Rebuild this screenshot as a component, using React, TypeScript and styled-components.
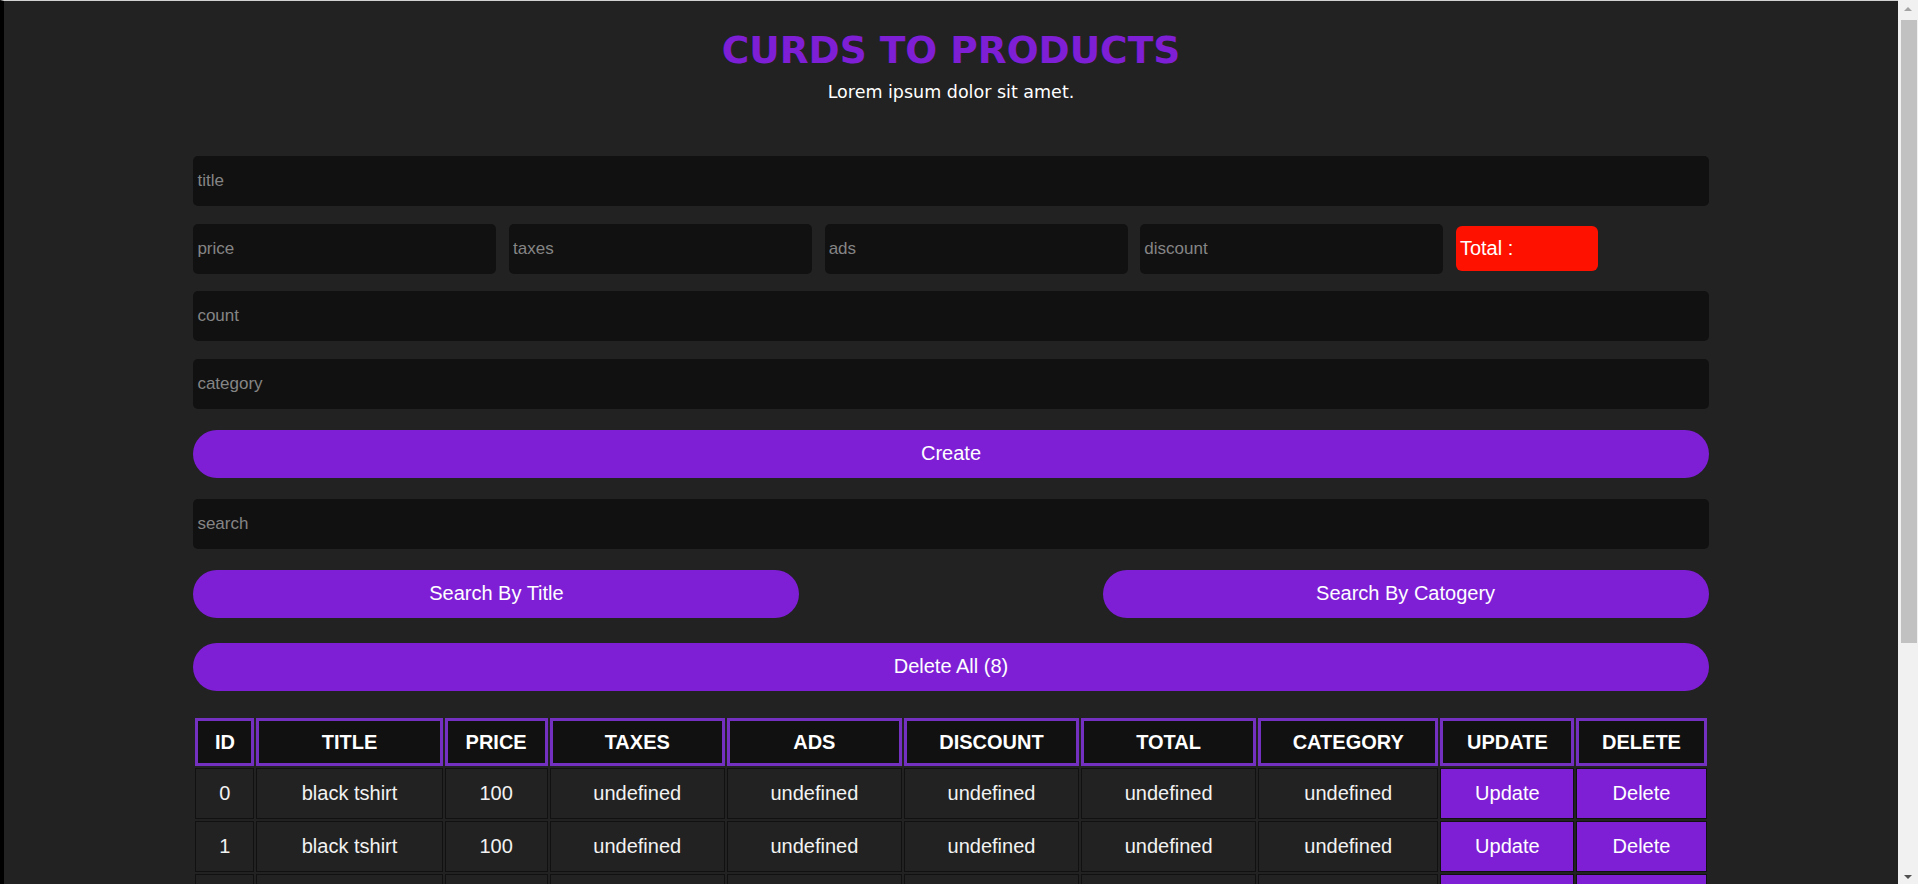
import React from 'react';
import styled, { createGlobalStyle } from 'styled-components';

interface Product {
  id: number;
  title: string;
  price: string;
  taxes?: string;
  ads?: string;
  discount?: string;
  total?: string;
  category?: string;
}

const products: Product[] = Array.from({ length: 8 }, (_, i) => ({
  id: i,
  title: 'black tshirt',
  price: '100',
}));

const columns = [
  { label: 'id', width: 59 },
  { label: 'title', width: 186 },
  { label: 'price', width: 103 },
  { label: 'taxes', width: 175 },
  { label: 'ads', width: 175 },
  { label: 'discount', width: 175 },
  { label: 'total', width: 175 },
  { label: 'category', width: 180 },
  { label: 'update', width: 134 },
  { label: 'delete', width: 130 },
];

const show = (value?: string) => (value === undefined ? 'undefined' : value);

const App: React.FC = () => {
  return (
    <>
      <GlobalStyle />
      <Frame>
        <Crud>
          <Head>
            <Title>curds to products</Title>
            <Subtitle>Lorem ipsum dolor sit amet.</Subtitle>
          </Head>

          <Controls>
            <Fields>
              <Input type="text" placeholder="title" />
              <PriceRow>
                <Input type="number" placeholder="price" $narrow />
                <Input type="number" placeholder="taxes" $narrow />
                <Input type="number" placeholder="ads" $narrow />
                <Input type="number" placeholder="discount" $narrow />
                <Total>Total :</Total>
              </PriceRow>
              <Input type="number" placeholder="count" />
              <Input type="text" placeholder="category" />
            </Fields>
            <PillButton>Create</PillButton>
            <Input type="text" placeholder="search" />
            <SearchRow>
              <PillButton $half>Search By Title</PillButton>
              <PillButton $half>Search By Catogery</PillButton>
            </SearchRow>
          </Controls>

          <Outputs>
            <PillButton>Delete All ({products.length})</PillButton>
            <Table>
              <thead>
                <tr>
                  {columns.map((col) => (
                    <Th key={col.label} style={{ width: col.width }}>
                      {col.label}
                    </Th>
                  ))}
                </tr>
              </thead>
              <tbody>
                {products.map((p) => (
                  <tr key={p.id}>
                    <Td>{p.id}</Td>
                    <Td>{p.title}</Td>
                    <Td>{p.price}</Td>
                    <Td>{show(p.taxes)}</Td>
                    <Td>{show(p.ads)}</Td>
                    <Td>{show(p.discount)}</Td>
                    <Td>{show(p.total)}</Td>
                    <Td>{show(p.category)}</Td>
                    <Td $action>
                      <RowButton>Update</RowButton>
                    </Td>
                    <Td $action>
                      <RowButton>Delete</RowButton>
                    </Td>
                  </tr>
                ))}
              </tbody>
            </Table>
          </Outputs>
        </Crud>
      </Frame>

      {/* the browser's scrollbar, as it shows in the screenshot */}
      <ScrollTrack>
        <ScrollArrow $dir="up" />
        <ScrollThumb />
        <ScrollArrow $dir="down" />
      </ScrollTrack>
    </>
  );
};

export default App;

const purple = '#7e1fd6';

const GlobalStyle = createGlobalStyle`
  * {
    box-sizing: border-box;
  }

  html,
  body {
    margin: 0;
    padding: 0;
    background-color: #222;
  }

  body {
    color: #fff;
    font-family: "Liberation Sans", Arial, sans-serif;
  }
`;

const Frame = styled.div`
  border-top: 1px solid #d2d2d2;
  border-left: 4px solid #000;
  margin-right: 20px;
  min-height: 100vh;
  padding-bottom: 20px;
`;

const Crud = styled.main`
  width: 80%;
  margin: 0 auto;
`;

const Head = styled.header`
  text-align: center;
  padding-top: 27px;
  font-family: "DejaVu Sans", Verdana, sans-serif;
`;

const Title = styled.h1`
  margin: 0;
  color: ${purple};
  font-size: 37.5px;
  line-height: 44px;
  font-weight: bold;
  text-transform: uppercase;
`;

const Subtitle = styled.p`
  margin: 10px 0 0;
  font-size: 17.5px;
  line-height: 20px;
  color: #fff;
`;

const Controls = styled.section`
  display: flex;
  flex-direction: column;
  gap: 21px;
  margin-top: 54px;
`;

const Fields = styled.div`
  display: flex;
  flex-direction: column;
  gap: 17.5px;
`;

const Input = styled.input<{ $narrow?: boolean }>`
  display: block;
  width: ${({ $narrow }) => ($narrow ? '20%' : '100%')};
  flex: ${({ $narrow }) => ($narrow ? '0 0 20%' : 'none')};
  height: 50px;
  padding: 4px;
  border: none;
  outline: none;
  border-radius: 5px;
  background-color: #111;
  color: #fff;
  font-family: "Liberation Sans", Arial, sans-serif;
  font-size: 17px;
  appearance: textfield;

  &::placeholder {
    color: #858585;
  }

  &::-webkit-outer-spin-button,
  &::-webkit-inner-spin-button {
    -webkit-appearance: none;
    margin: 0;
  }
`;

const PriceRow = styled.div`
  display: flex;
  align-items: center;
  gap: 12.6px;
`;

const Total = styled.small`
  display: flex;
  align-items: center;
  width: 142px;
  height: 45px;
  padding: 0 4px;
  border-radius: 6px;
  background-color: #ff1100;
  color: #fff;
  font-size: 20px;
`;

const PillButton = styled.button<{ $half?: boolean }>`
  display: block;
  width: ${({ $half }) => ($half ? '40%' : '100%')};
  height: 48px;
  border: none;
  border-radius: 24px;
  background-color: ${purple};
  color: #fff;
  font-family: "Liberation Sans", Arial, sans-serif;
  font-size: 20px;
  cursor: pointer;
`;

const SearchRow = styled.div`
  display: flex;
  justify-content: space-between;
`;

const Outputs = styled.section`
  display: flex;
  flex-direction: column;
  gap: 25px;
  margin-top: 25px;
`;

const Table = styled.table`
  width: 100%;
  border-spacing: 2px;
  text-align: center;
  font-size: 20px;
`;

const Th = styled.th`
  padding: 9px 4px;
  line-height: 24px;
  border: 3px solid #7430c0;
  background-color: #111;
  color: #fff;
  font-weight: bold;
  text-transform: uppercase;
`;

const Td = styled.td<{ $action?: boolean }>`
  padding: ${({ $action }) => ($action ? '0' : '13px 4px')};
  line-height: 23px;
  border: 1px solid #111;
  color: #f2f2f2;
`;

const RowButton = styled.button`
  display: block;
  width: 100%;
  height: 49px;
  border: none;
  background-color: ${purple};
  color: #fff;
  font-family: "Liberation Sans", Arial, sans-serif;
  font-size: 20px;
  cursor: pointer;
`;

const ScrollTrack = styled.div`
  position: fixed;
  top: 0;
  right: 0;
  width: 20px;
  height: 100vh;
  display: flex;
  flex-direction: column;
  align-items: center;
  background-color: #f1f1f1;
`;

const ScrollThumb = styled.div`
  width: 16px;
  height: 623px;
  margin-left: 2px;
  background-color: #c1c1c1;
`;

const ScrollArrow = styled.div<{ $dir: 'up' | 'down' }>`
  width: 0;
  height: 0;
  border-left: 4px solid transparent;
  border-right: 4px solid transparent;
  ${({ $dir }) =>
    $dir === 'up'
      ? `
    margin: 7px 0 9px;
    border-bottom: 4px solid #a3a3a3;
  `
      : `
    margin: auto 0 5px;
    border-top: 4px solid #505050;
  `}
`;
